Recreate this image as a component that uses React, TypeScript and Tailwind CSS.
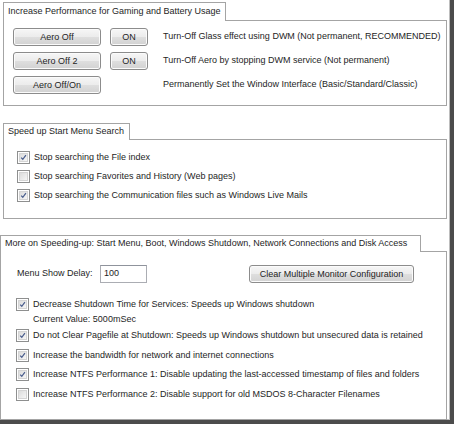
import type { ReactNode } from "react";

const font = "font-['Liberation_Sans',Arial,sans-serif] text-[9px] text-[#1e1e1e]";

function Group({
  title,
  tabClass,
  headerClass,
  className,
  bodyClass,
  children,
}: {
  title: string;
  tabClass: string;
  headerClass: string;
  className: string;
  bodyClass: string;
  children: ReactNode;
}) {
  return (
    <div className={className}>
      <div className={`flex ${headerClass}`}>
        <div className={`flex shrink-0 items-center border-t border-l border-r border-[#a4a4a4] px-[4px] whitespace-nowrap ${tabClass}`}>
          {title}
        </div>
        <div className="flex-1 border-b border-[#a4a4a4]" />
      </div>
      <div className={`border-l border-r border-b border-[#a4a4a4] ${bodyClass}`}>{children}</div>
    </div>
  );
}

function WinButton({ label, className }: { label: string; className: string }) {
  return (
    <button
      className={`flex h-[18px] shrink-0 items-center justify-center whitespace-nowrap rounded-[3px] border border-[#8c8c8c] bg-[linear-gradient(to_bottom,#f6f6f6_0%,#ececec_48%,#dedede_52%,#d2d2d2_100%)] leading-none shadow-[inset_0_0_0_1px_#fbfbfb] ${className}`}
    >
      {label}
    </button>
  );
}

function CheckBox({ checked }: { checked: boolean }) {
  return (
    <div className="flex h-[13px] w-[13px] shrink-0 items-center justify-center border border-[#8e8f8f] bg-white p-px">
      <div className="flex h-full w-full items-center justify-center border border-[#d4d4d4] bg-[linear-gradient(135deg,#dcdcdc,#f6f6f6)]">
        {checked && (
          <svg width="9" height="9" viewBox="0 0 9 9">
            <path d="M1.5 4.6 L3.6 6.8 L7.6 1.6" fill="none" stroke="#4a5e8e" strokeWidth="1.6" />
          </svg>
        )}
      </div>
    </div>
  );
}

function CheckRow({ checked, label, h }: { checked: boolean; label: string; h: string }) {
  return (
    <div className={`flex items-center gap-[4px] ${h}`}>
      <CheckBox checked={checked} />
      <span className="whitespace-nowrap">{label}</span>
    </div>
  );
}

const aeroRows = [
  { btn: "Aero Off", on: true, text: "Turn-Off Glass effect using DWM (Not permanent, RECOMMENDED)" },
  { btn: "Aero Off 2", on: true, text: "Turn-Off Aero by stopping DWM service (Not permanent)" },
  { btn: "Aero Off/On", on: false, text: "Permanently Set the Window Interface (Basic/Standard/Classic)" },
];

const searchRows = [
  { checked: true, label: "Stop searching the File index" },
  { checked: false, label: "Stop searching Favorites and History (Web pages)" },
  { checked: true, label: "Stop searching the Communication files such as Windows Live Mails" },
];

const moreRows = [
  { checked: true, label: "Do not Clear Pagefile at Shutdown: Speeds up Windows shutdown but unsecured data is retained" },
  { checked: true, label: "Increase the bandwidth for network and internet connections" },
  { checked: true, label: "Increase NTFS Performance 1: Disable updating the last-accessed timestamp of files and folders" },
  { checked: false, label: "Increase NTFS Performance 2: Disable support for old MSDOS 8-Character Filenames" },
];

export default function App() {
  return (
    <div className={`h-[424px] w-[454px] overflow-hidden border-r-[4px] border-b-[4px] border-[#4c4c4c] ${font}`}>
      <div className="h-full w-full border-r border-b border-[#bdbdbd] bg-white">
        {/* Gaming / battery */}
        <Group
          title="Increase Performance for Gaming and Battery Usage"
          className="ml-[3px] w-[444px] pt-[2px]"
          headerClass="h-[19px]"
          tabClass="w-[223px]"
          bodyClass="flex flex-col gap-[6px] pl-[9px] pt-[7px] pb-[11px]"
        >
          {aeroRows.map((r) => (
            <div key={r.btn} className="flex items-center">
              <WinButton label={r.btn} className="w-[88px]" />
              {r.on ? <WinButton label="ON" className="ml-[9px] w-[38px]" /> : <div className="ml-[9px] w-[38px] shrink-0" />}
              <span className="ml-[15px] whitespace-nowrap">{r.text}</span>
            </div>
          ))}
        </Group>

        {/* Start menu search */}
        <Group
          title="Speed up Start Menu Search"
          className="mt-[17px] ml-[3px] w-[444px]"
          headerClass="h-[17px]"
          tabClass="w-[127px]"
          bodyClass="flex flex-col pl-[13px] pt-[8px] pb-[13px]"
        >
          {searchRows.map((r) => (
            <CheckRow key={r.label} checked={r.checked} label={r.label} h="h-[19px]" />
          ))}
        </Group>

        {/* More speed-up options */}
        <Group
          title="More on Speeding-up: Start Menu, Boot, Windows Shutdown, Network Connections and Disk Access"
          className="mt-[16px] w-[447px]"
          headerClass="h-[17px]"
          tabClass="w-[421px] px-[2px]"
          bodyClass="flex flex-col pl-[15px] pt-[13px] pb-[15px]"
        >
          <div className="flex h-[18px] items-center">
            <span className="w-[84px] shrink-0 whitespace-nowrap pl-[1px]">Menu Show Delay:</span>
            <div className="flex h-[18px] w-[47px] shrink-0 items-center border border-[#abadb3] border-t-[#8f939c] pl-[3px]">100</div>
            <WinButton label="Clear Multiple Monitor Configuration" className="ml-[102px] w-[165px]" />
          </div>
          <div className="mt-[12px]">
            <CheckRow checked label="Decrease Shutdown Time for Services: Speeds up Windows shutdown" h="h-[19px]" />
            <div className="flex h-[12px] items-center pl-[17px]">Current Value: 5000mSec</div>
            {moreRows.map((r) => (
              <CheckRow key={r.label} checked={r.checked} label={r.label} h="h-[19.5px]" />
            ))}
          </div>
        </Group>
      </div>
    </div>
  );
}
